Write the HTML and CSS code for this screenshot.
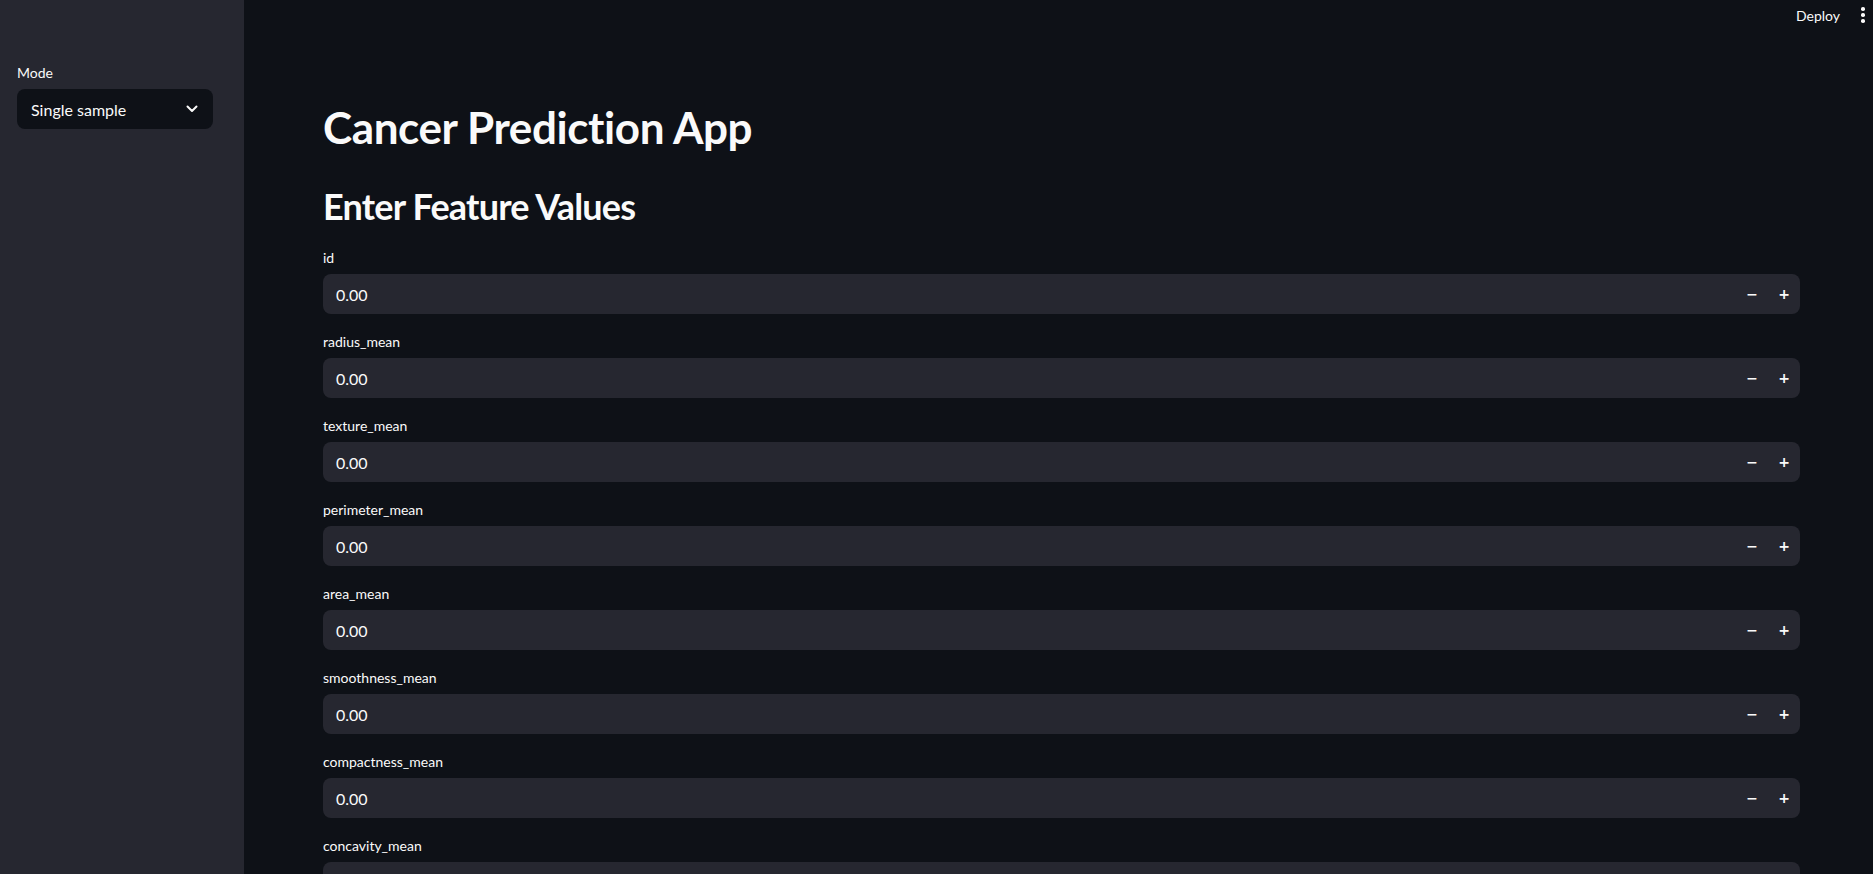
FILE: index.html
```html
<!DOCTYPE html>
<html lang="en">
<head>
<meta charset="utf-8">
<title>Cancer Prediction App</title>
<link rel="stylesheet" href="styles.css">
</head>
<body>
<div class="app">
  <aside class="sidebar">
    <div class="field">
      <label class="label">Mode</label>
      <div class="select">
        <span>Single sample</span>
        <svg class="chev" width="12" height="8" viewBox="0 0 12 8"><path d="M1.5 1.5 L6 6 L10.5 1.5" fill="none" stroke="#fafafa" stroke-width="2" stroke-linecap="round" stroke-linejoin="round"/></svg>
      </div>
    </div>
  </aside>
  <main class="main">
    <header class="topbar">
      <span class="deploy">Deploy</span>
      <span class="menu"><i></i><i></i><i></i></span>
    </header>
    <section class="content">
      <h1 class="title">Cancer Prediction App</h1>
      <h2 class="subtitle">Enter Feature Values</h2>
      <div class="field num"><label class="label">id</label><div class="input"><span class="val">0.00</span><span class="step">−</span><span class="step">+</span></div></div>
      <div class="field num"><label class="label">radius_mean</label><div class="input"><span class="val">0.00</span><span class="step">−</span><span class="step">+</span></div></div>
      <div class="field num"><label class="label">texture_mean</label><div class="input"><span class="val">0.00</span><span class="step">−</span><span class="step">+</span></div></div>
      <div class="field num"><label class="label">perimeter_mean</label><div class="input"><span class="val">0.00</span><span class="step">−</span><span class="step">+</span></div></div>
      <div class="field num"><label class="label">area_mean</label><div class="input"><span class="val">0.00</span><span class="step">−</span><span class="step">+</span></div></div>
      <div class="field num"><label class="label">smoothness_mean</label><div class="input"><span class="val">0.00</span><span class="step">−</span><span class="step">+</span></div></div>
      <div class="field num"><label class="label">compactness_mean</label><div class="input"><span class="val">0.00</span><span class="step">−</span><span class="step">+</span></div></div>
      <div class="field num"><label class="label">concavity_mean</label><div class="input"><span class="val">0.00</span><span class="step">−</span><span class="step">+</span></div></div>
    </section>
  </main>
</div>
</body>
</html>
```
FILE: styles.css
```css
* { box-sizing: border-box; }
html, body { margin: 0; padding: 0; height: 874px; overflow: hidden; }
body {
  font-family: Lato, "Noto Sans", sans-serif;
  color: #fafafa;
  background: #0e1117;
}
.app { display: flex; height: 874px; }
.sidebar {
  width: 244px;
  flex: none;
  background: #262730;
  padding: 61px 31px 0 17px;
}
.main {
  flex: 1;
  display: flex;
  flex-direction: column;
  background: #0e1117;
  overflow: hidden;
}
.topbar {
  height: 32px;
  flex: none;
  display: flex;
  align-items: center;
  justify-content: flex-end;
  padding-right: 6px;
  padding-bottom: 2px;
}
.deploy { font-size: 14px; color: #fafafa; margin-right: 19px; }
.menu { display: flex; flex-direction: column; gap: 2.5px; align-items: center; width: 8px; }
.menu i { width: 3.5px; height: 3.5px; border-radius: 50%; background: #fafafa; display: block; }
.content { padding: 69px 73px 0 79px; display: flex; flex-direction: column; gap: 16px; }
.title { margin: 0; font-size: 44px; font-weight: 700; line-height: 52px; letter-spacing: -0.4px; }
.subtitle { margin: 15px 0 0; font-size: 36px; font-weight: 700; line-height: 44px; letter-spacing: -0.8px; padding-bottom: 2px; }
.field { display: flex; flex-direction: column; }
.label { font-size: 14px; line-height: 24px; margin-bottom: 4px; color: #fafafa; }
.select {
  height: 40px;
  background: #0e1117;
  border-radius: 8px;
  display: flex;
  align-items: center;
  justify-content: space-between;
  padding: 0 15px 0 14px;
  font-size: 16px;
}
.input {
  height: 40px;
  background: #262730;
  border-radius: 8px;
  display: flex;
  align-items: center;
  font-size: 16px;
}
.val { flex: 1; padding-left: 13px; }
.step {
  width: 32px;
  height: 40px;
  display: flex;
  align-items: center;
  justify-content: center;
  font-family: "DejaVu Sans", sans-serif;
  font-weight: 700;
  font-size: 14px;
}
```
